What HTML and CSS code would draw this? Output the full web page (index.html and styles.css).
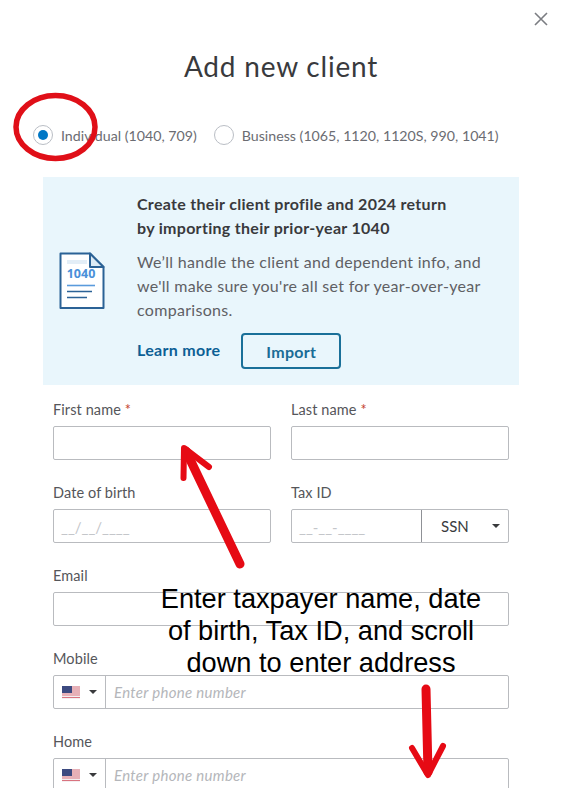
FILE: index.html
```html
<!DOCTYPE html>
<html lang="en">
<head>
    <meta charset="UTF-8">
    <meta name="viewport" content="width=device-width, initial-scale=1.0">
    <title>Add new client</title>
    <link rel="stylesheet" href="styles.css">
</head>
<body>
    <div class="dialog">
        <div class="close-row">
            <svg class="close" width="14" height="14" viewBox="0 0 14 14"><path d="M1 1 13 13M13 1 1 13" stroke="#7b7d82" stroke-width="1.6" fill="none"/></svg>
        </div>
        <h1>Add new client</h1>

        <div class="client-type">
            <div class="radio-opt">
                <span class="radio checked"></span>
                <span>Individual (1040, 709)</span>
            </div>
            <div class="radio-opt">
                <span class="radio"></span>
                <span>Business (1065, 1120, 1120S, 990, 1041)</span>
            </div>
        </div>

        <div class="banner">
            <svg class="doc-icon" width="46" height="58" viewBox="0 0 46 58">
                <path d="M1.5 1.5H31L44.5 15V56H1.5Z" fill="#fff" stroke="#2b6296" stroke-width="2" stroke-linejoin="round"/>
                <path d="M31 1.5V15H44.5Z" fill="#dcebf5" stroke="#2b6296" stroke-width="2" stroke-linejoin="round"/>
                <rect x="8" y="8" width="20" height="4" fill="#e3eef7"/>
                <text x="22" y="26" class="doc-year" text-anchor="middle">1040</text>
                <path d="M8 33.5H36" stroke="#5a9bdc" stroke-width="1.6"/>
                <path d="M8 39.5H33M8 45.500H28" stroke="#2b6296" stroke-width="1.6"/>
            </svg>
            <div class="banner-body">
                <h2>Create their client profile and 2024 return<br>by importing their prior-year 1040</h2>
                <p>We’ll handle the client and dependent info, and<br>we'll make sure you're all set for year-over-year<br>comparisons.</p>
                <div class="banner-actions">
                    <a class="learn">Learn more</a>
                    <button class="import">Import</button>
                </div>
            </div>
        </div>

        <div class="form">
            <div class="row">
                <div class="field">
                    <label>First name <span class="req">*</span></label>
                    <div class="input"></div>
                </div>
                <div class="field">
                    <label>Last name <span class="req">*</span></label>
                    <div class="input"></div>
                </div>
            </div>
            <div class="row">
                <div class="field">
                    <label>Date of birth</label>
                    <div class="input mask">__/__/____</div>
                </div>
                <div class="field">
                    <label>Tax ID</label>
                    <div class="input split">
                        <span class="mask tax-mask">__-__-____</span>
                        <span class="ssn">SSN<i class="caret"></i></span>
                    </div>
                </div>
            </div>
            <div class="row">
                <div class="field">
                    <label>Email</label>
                    <div class="input"></div>
                </div>
            </div>
            <div class="row">
                <div class="field">
                    <label>Mobile</label>
                    <div class="input split">
                        <span class="country">
                            <svg width="18" height="13" viewBox="0 0 18 13"><use href="#flag"/></svg>
                            <i class="caret"></i>
                        </span>
                        <span class="phone">Enter phone number</span>
                    </div>
                </div>
            </div>
            <div class="row">
                <div class="field">
                    <label>Home</label>
                    <div class="input split">
                        <span class="country">
                            <svg width="18" height="13" viewBox="0 0 18 13"><use href="#flag"/></svg>
                            <i class="caret"></i>
                        </span>
                        <span class="phone">Enter phone number</span>
                    </div>
                </div>
            </div>
        </div>
    </div>

    <svg class="defs" width="0" height="0">
        <symbol id="flag" viewBox="0 0 18 13">
            <rect width="18" height="13" fill="#f4eef0"/>
            <path d="M0 1H18M0 3H18M0 5H18M0 7H18M0 9H18M0 11.500H18" stroke="#d9737f" stroke-width="1"/>
            <rect width="10" height="7" fill="#3c4a80"/>
        </symbol>
    </svg>

    <!-- red markup on top of the screenshot -->
    <svg class="markup" width="562" height="788" viewBox="0 0 562 788">
        <ellipse cx="55.500" cy="127" rx="39.500" ry="31.500" fill="none" stroke="#e00f18" stroke-width="5.500"/>
        <g fill="none" stroke="#e60a14" stroke-linecap="round" stroke-linejoin="round">
            <path d="M240 564 186 451" stroke-width="9"/>
            <path d="M183.500 478 184 448 209 467" stroke-width="6"/>
            <path d="M426 689 428 772" stroke-width="9"/>
            <path d="M412 748 428 775 443 746" stroke-width="6"/>
        </g>
    </svg>
    <div class="note">Enter taxpayer name, date<br>of birth, Tax ID, and scroll<br>down to enter address</div>
</body>
</html>
```

FILE: styles.css
```css
html, body {
    height: 100%;
    margin: 0;
    padding: 0;
    background-color: white;
    overflow: hidden;
}
body {
    position: relative;
    font-family: Lato, "Open Sans", Arial, sans-serif;
    color: #393a3d;
}
.dialog {
    padding: 12px 0 0 0;
    box-sizing: border-box;
    height: 788px;
    overflow: hidden;
}
.close-row {
    display: flex;
    justify-content: flex-end;
    padding-right: 14px;
    height: 16px;
}
h1 {
    margin: 20px 0 0 0;
    height: 36px;
    line-height: 36px;
    text-align: center;
    font-size: 28px;
    font-weight: 400;
    letter-spacing: 0.8px;
}
.client-type {
    display: flex;
    margin: 41px 0 0 33px;
    height: 20px;
    font-size: 14.2px;
    color: #6b6c72;
}
.radio-opt {
    display: flex;
    align-items: center;
    gap: 8px;
    margin-right: 17px;
}
.radio {
    width: 20px;
    height: 20px;
    box-sizing: border-box;
    border: 1px solid #babec5;
    border-radius: 50%;
    display: flex;
    align-items: center;
    justify-content: center;
}
.radio.checked::after {
    content: "";
    width: 10px;
    height: 10px;
    border-radius: 50%;
    background-color: #0077c5;
}
.banner {
    display: flex;
    margin: 32px 43px 0 43px;
    height: 208px;
    box-sizing: border-box;
    padding: 15px 0 0 16px;
    background-color: #e9f6fc;
}
.doc-icon {
    margin: 60px 32px 0 0;
    flex-shrink: 0;
}
.doc-year {
    font-family: "Open Sans", Arial, sans-serif;
    font-size: 12.500px;
    font-weight: 700;
    fill: #4a90d9;
}
.banner-body h2 {
    margin: 0;
    font-size: 16px;
    font-weight: 700;
    line-height: 24px;
    letter-spacing: 0.3px;
}
.banner-body p {
    margin: 10px 0 0 0;
    font-size: 16px;
    line-height: 24px;
    letter-spacing: 0.3px;
    color: #5f6064;
}
.banner-actions {
    display: flex;
    align-items: center;
    gap: 21px;
    margin-top: 11px;
}
.learn {
    padding-bottom: 4px;
    font-size: 16px;
    font-weight: 700;
    letter-spacing: 0.3px;
    color: #0d5f95;
}
.import {
    width: 100px;
    height: 36px;
    background: none;
    border: 2px solid #1a7099;
    border-radius: 4px;
    font-family: inherit;
    font-size: 16px;
    font-weight: 700;
    letter-spacing: 0.3px;
    color: #1a6c96;
}
.form {
    padding: 15px 53px 0 53px;
}
.row {
    display: flex;
    gap: 20px;
    height: 83px;
}
.field {
    flex: 1;
    min-width: 0;
}
label {
    display: block;
    height: 18px;
    line-height: 18px;
    margin: 1px 0 7px 0;
    font-size: 14.5px;
    letter-spacing: 0.1px;
    color: #55565a;
}
.req {
    color: #c4432f;
}
.input {
    height: 34px;
    box-sizing: border-box;
    border: 1px solid #b9bbbf;
    border-radius: 2px;
}
.mask {
    padding-left: 7px;
    line-height: 34px;
    font-size: 15px;
    color: #c4c6ca;
}
.split {
    display: flex;
}
.tax-mask {
    flex: 1;
}
.ssn {
    width: 87px;
    box-sizing: border-box;
    display: flex;
    align-items: center;
    padding-left: 19px;
    border-left: 1px solid #8f9196;
    font-size: 15px;
    color: #393a3d;
}
.ssn .caret {
    margin-left: 23px;
}
.caret {
    width: 0;
    height: 0;
    border-left: 4px solid transparent;
    border-right: 4px solid transparent;
    border-top: 4px solid #393a3d;
}
.country {
    width: 52px;
    box-sizing: border-box;
    display: flex;
    align-items: center;
    gap: 9px;
    padding-left: 8px;
    border-right: 1px solid #b9bbbf;
}
.phone {
    padding-left: 8px;
    line-height: 32px;
    font-size: 15px;
    letter-spacing: 0.3px;
    font-style: italic;
    color: #b4b6ba;
}
.defs {
    position: absolute;
}
.markup {
    position: absolute;
    left: 0;
    top: 0;
    pointer-events: none;
}
.note {
    position: absolute;
    left: 121px;
    top: 583px;
    width: 400px;
    text-align: center;
    font-family: "Liberation Sans", Arial, sans-serif;
    font-size: 27.2px;
    line-height: 32px;
    color: #000;
}
```
